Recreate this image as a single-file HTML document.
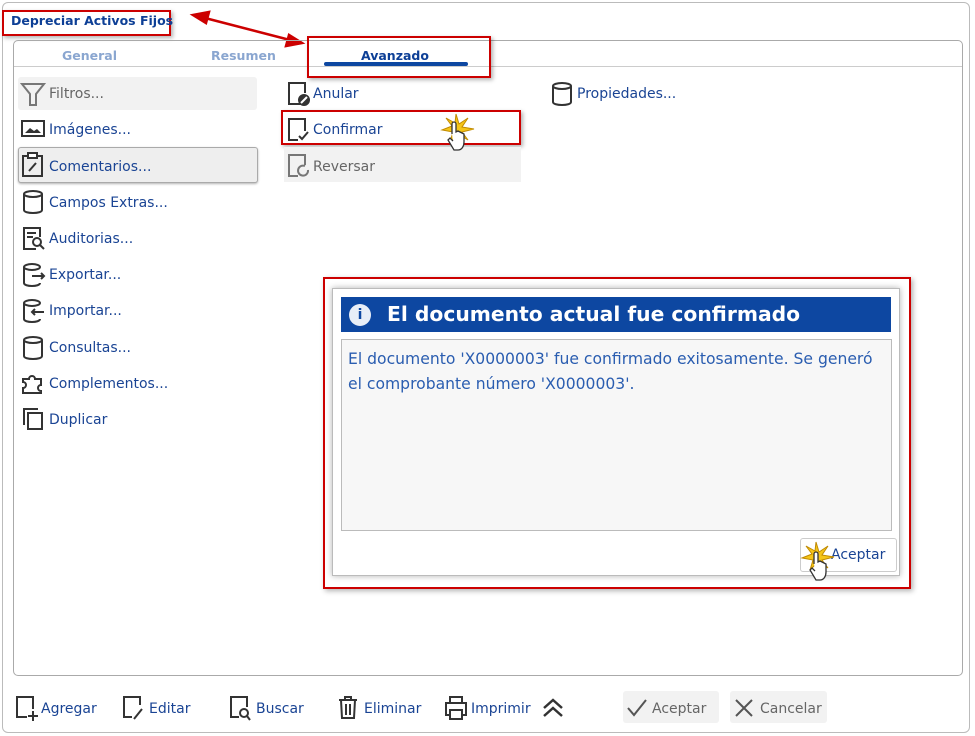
<!DOCTYPE html>
<html><head><meta charset="utf-8"><style>
*{box-sizing:border-box;margin:0;padding:0}
body{width:975px;height:736px;background:#fff;font-family:"DejaVu Sans","Liberation Sans",sans-serif;font-size:14px;color:#1a4494;position:relative;overflow:hidden}
.a{position:absolute}
.t{position:absolute;white-space:nowrap;line-height:18px}
svg.i{position:absolute;fill:none;stroke:#333;stroke-width:2}
</style></head><body>
<div class="a" style="left:2px;top:2px;width:968px;height:731px;border:1px solid #bbb;border-radius:6px"></div>
<div class="a" style="left:2px;top:10px;width:169px;height:26px;border:2px solid #c00;box-shadow:2px 2px 4px rgba(0,0,0,.3)"></div>
<div class="t" style="left:11px;top:12px;font-weight:bold;font-size:12.5px;color:#0d3f96">Depreciar Activos Fijos</div>
<svg class="a" style="left:0;top:0" width="975" height="736"><g stroke="#c00" stroke-width="2.5" fill="#c00"><line x1="205" y1="18" x2="290" y2="40"/><polygon points="193,15 209,12 206,23"/><polygon points="302,43 286,46 289,35"/></g></svg>
<div class="a" style="left:13px;top:40px;width:950px;height:636px;border:1px solid #aaa;border-radius:5px"></div>
<div class="a" style="left:14px;top:66px;width:948px;height:1px;background:#ccc"></div>
<div class="t" style="left:62px;top:47px;font-weight:bold;font-size:12.5px;color:#8aa6d0">General</div>
<div class="t" style="left:211px;top:47px;font-weight:bold;font-size:12.5px;color:#8aa6d0">Resumen</div>
<div class="t" style="left:361px;top:47px;font-weight:bold;font-size:12.5px;color:#0d3f96">Avanzado</div>
<div class="a" style="left:324px;top:62px;width:144px;height:4px;background:#0d47a1;border-radius:2px"></div>
<div class="a" style="left:307px;top:36px;width:184px;height:42px;border:2px solid #c00;box-shadow:2px 2px 4px rgba(0,0,0,.3)"></div>

<div class="a" style="left:18px;top:77px;width:239px;height:33px;background:#f2f2f2;border-radius:3px"></div>
<div class="a" style="left:18px;top:147px;width:240px;height:36px;background:#eee;border:1px solid #aaa;border-radius:3px;box-shadow:0 1px 2px rgba(0,0,0,.3)"></div>
<svg class="i" style="left:20px;top:81px" width="26" height="26"><path d="M2 3h22l-8 10v11h-6V13z" stroke="#777"/></svg>
<div class="t" style="left:49px;top:85px;color:#666">Filtros...</div>
<svg class="i" style="left:21px;top:119px" width="24" height="20"><rect x="1" y="2" width="22" height="15"/><path d="M4 14l5-5 4 3 3-2 4 4z" fill="#333" stroke="none"/></svg>
<div class="t" style="left:49px;top:121px">Imágenes...</div>
<svg class="i" style="left:22px;top:152px" width="22" height="26"><rect x="1" y="4" width="19" height="20"/><rect x="6" y="1" width="9" height="5" fill="#fff"/><path d="M7 19l7-8"/></svg>
<div class="t" style="left:49px;top:158px">Comentarios...</div>
<svg class="i" style="left:22px;top:189px" width="22" height="26"><ellipse cx="11" cy="5" rx="9" ry="3"/><path d="M2 5v16c0 4 18 4 18 0V5"/></svg>
<div class="t" style="left:49px;top:194px">Campos Extras...</div>
<svg class="i" style="left:22px;top:226px" width="24" height="26"><path d="M14 23H2V2h16v9"/><circle cx="15" cy="16" r="4"/><path d="M18 19l4 4M5 7h9M5 11h6"/></svg>
<div class="t" style="left:49px;top:230px">Auditorias...</div>
<svg class="i" style="left:22px;top:262px" width="24" height="26"><ellipse cx="10" cy="5" rx="8" ry="3"/><path d="M2 5v16c0 4 16 4 16 0M10 14h12M19 11l3 3-3 3"/></svg>
<div class="t" style="left:49px;top:266px">Exportar...</div>
<svg class="i" style="left:22px;top:298px" width="24" height="26"><ellipse cx="10" cy="5" rx="8" ry="3"/><path d="M2 5v16c0 4 16 4 16 0M22 14H10M13 11l-3 3 3 3"/></svg>
<div class="t" style="left:49px;top:302px">Importar...</div>
<svg class="i" style="left:22px;top:335px" width="22" height="26"><ellipse cx="11" cy="5" rx="9" ry="3"/><path d="M2 5v16c0 4 18 4 18 0V5"/></svg>
<div class="t" style="left:49px;top:339px">Consultas...</div>
<svg class="i" style="left:21px;top:371px" width="24" height="24"><path d="M2 8h6a3 3 0 1 1 6 0h6v6a3 3 0 1 0 0 6v2H2v-5a3 3 0 1 0 0-6z"/></svg>
<div class="t" style="left:49px;top:375px">Complementos...</div>
<svg class="i" style="left:22px;top:407px" width="22" height="24"><rect x="6" y="6" width="14" height="16"/><path d="M2 18V2h14"/></svg>
<div class="t" style="left:49px;top:411px">Duplicar</div>

<svg class="i" style="left:287px;top:81px" width="24" height="26"><path d="M14 23H2V2h16v10"/><circle cx="17" cy="19" r="5" fill="#333"/><path d="M14 22l6-6" stroke="#fff"/></svg>
<div class="t" style="left:313px;top:85px">Anular</div>
<div class="a" style="left:281px;top:110px;width:240px;height:35px;border:2px solid #c00;box-shadow:2px 2px 4px rgba(0,0,0,.3)"></div>
<svg class="i" style="left:287px;top:117px" width="24" height="26"><path d="M11 23H2V2h16v12M12 19l3 3 6-7"/></svg>
<div class="t" style="left:313px;top:121px">Confirmar</div>
<div class="a" style="left:284px;top:147px;width:237px;height:35px;background:#f2f2f2"></div>
<svg class="i" style="left:287px;top:153px" width="24" height="26"><path d="M11 23H2V2h16v10" stroke="#777"/><path d="M21 17a5 5 0 1 1-3-4" stroke="#777"/></svg>
<div class="t" style="left:313px;top:158px;color:#666">Reversar</div>
<svg class="i" style="left:551px;top:81px" width="22" height="26"><ellipse cx="11" cy="5" rx="9" ry="3"/><path d="M2 5v16c0 4 18 4 18 0V5"/></svg>
<div class="t" style="left:577px;top:85px">Propiedades...</div>
<svg class="a" style="left:438px;top:112px" width="40" height="50"><polygon points="18,2 21,12 30,6 24,15 36,17 24,20 30,28 20,22 12,30 15,20 4,18 14,14 8,6 17,11" fill="#f5c518" stroke="#c08a00"/><path d="M14 22v-10a2 2 0 0 1 4 0v8l2-1 2 1 2 1 2 1v8c0 4-2 8-6 8h-4l-6-10 2-2 3 3" fill="#fff" stroke="#333" stroke-width="1.3"/></svg>

<div class="a" style="left:323px;top:277px;width:588px;height:312px;border:2px solid #c00;box-shadow:2px 2px 5px rgba(0,0,0,.3)"></div>
<div class="a" style="left:332px;top:288px;width:568px;height:288px;background:#fff;border:1px solid #bbb;box-shadow:0 0 6px rgba(0,0,0,.3)"></div>
<div class="a" style="left:341px;top:297px;width:550px;height:35px;background:#0d47a1"></div>
<div class="a" style="left:349px;top:304px;width:22px;height:22px;border-radius:50%;background:#e8eef7;color:#0d47a1;font-weight:bold;font-size:14px;text-align:center;line-height:22px">i</div>
<div class="t" style="left:387px;top:302px;color:#fff;font-weight:bold;font-size:20.3px;line-height:24px">El documento actual fue confirmado</div>
<div class="a" style="left:341px;top:339px;width:551px;height:192px;background:#f7f7f7;border:1px solid #bbb"></div>
<div class="t" style="left:348px;top:347px;color:#2a5db0;line-height:25px;font-size:15.6px">El documento 'X0000003' fue confirmado exitosamente. Se generó<br>el comprobante número 'X0000003'.</div>
<div class="a" style="left:800px;top:538px;width:97px;height:34px;background:#fff;border:1px solid #ccc;border-radius:3px"></div>
<div class="t" style="left:831px;top:546px">Aceptar</div>
<svg class="a" style="left:800px;top:540px" width="40" height="52"><polygon points="16,2 19,12 28,6 22,15 34,17 22,20 28,28 18,22 10,30 13,20 2,18 12,14 6,6 15,11" fill="#f5c518" stroke="#c08a00"/><path d="M14 24v-10a2 2 0 0 1 4 0v8l2-1 2 1 2 1 2 1v8c0 4-2 8-6 8h-4l-6-10 2-2 3 3" fill="#fff" stroke="#333" stroke-width="1.3"/></svg>

<svg class="i" style="left:15px;top:695px" width="24" height="28"><path d="M12 22H2V2h16v12M18 16v10M13 21h10"/></svg>
<div class="t" style="left:41px;top:700px">Agregar</div>
<svg class="i" style="left:122px;top:695px" width="24" height="28"><path d="M10 22H2V2h16v8M12 24l8-10"/></svg>
<div class="t" style="left:149px;top:700px">Editar</div>
<svg class="i" style="left:229px;top:695px" width="24" height="28"><path d="M10 22H2V2h16v10"/><circle cx="15" cy="18" r="4"/><path d="M18 21l3 4"/></svg>
<div class="t" style="left:256px;top:700px">Buscar</div>
<svg class="i" style="left:337px;top:695px" width="22" height="26"><path d="M2 5h18M8 5V2h6v3M4 5l1 18h12l1-18M9 9v11M13 9v11"/></svg>
<div class="t" style="left:364px;top:700px">Eliminar</div>
<svg class="i" style="left:444px;top:695px" width="24" height="26"><path d="M6 8V2h12v6M6 20H2V8h20v12h-4M6 15h12v9H6z"/></svg>
<div class="t" style="left:471px;top:700px">Imprimir</div>
<svg class="i" style="left:541px;top:697px" width="24" height="22"><path d="M3 11l9-8 9 8M3 19l9-8 9 8" stroke-width="2.5"/></svg>
<div class="a" style="left:623px;top:691px;width:96px;height:32px;background:#f2f2f2;border-radius:3px"></div>
<svg class="i" style="left:626px;top:698px" width="22" height="20"><path d="M2 10l6 7L20 2" stroke="#555"/></svg>
<div class="t" style="left:652px;top:700px;color:#666">Aceptar</div>
<div class="a" style="left:730px;top:691px;width:97px;height:32px;background:#f2f2f2;border-radius:3px"></div>
<svg class="i" style="left:734px;top:698px" width="20" height="20"><path d="M2 2l16 16M18 2L2 18" stroke="#555"/></svg>
<div class="t" style="left:760px;top:700px;color:#666">Cancelar</div>
</body></html>
